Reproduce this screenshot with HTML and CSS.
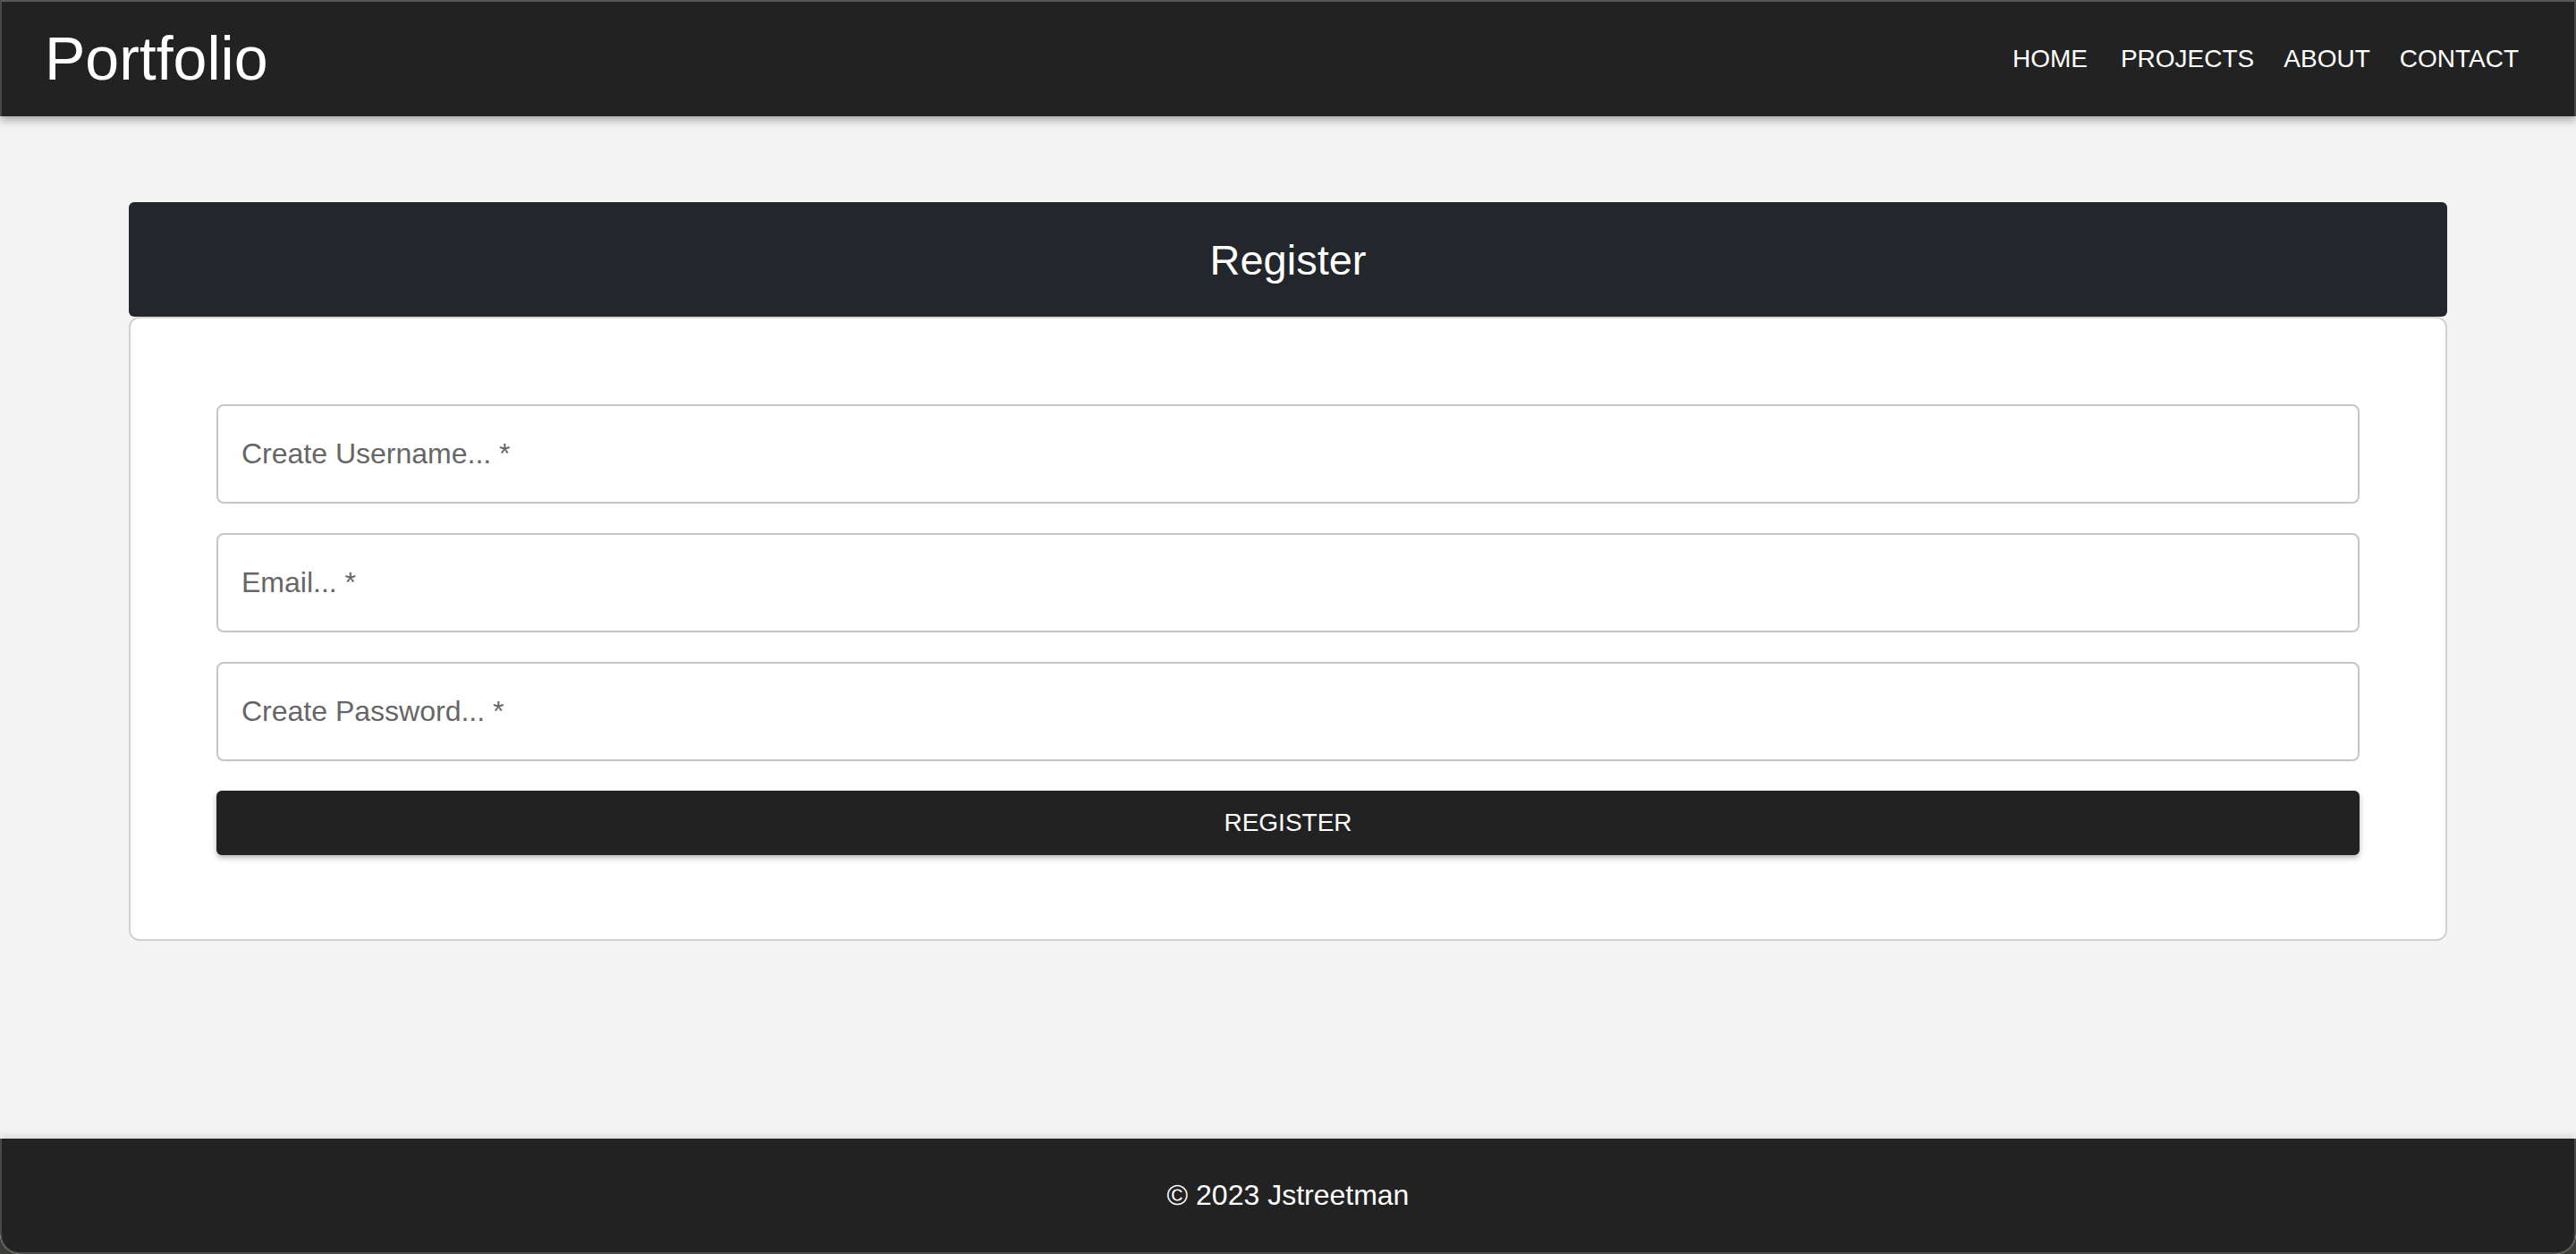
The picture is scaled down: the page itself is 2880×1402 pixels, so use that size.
FILE: index.html
```html
<!DOCTYPE html>
<html lang="en">
<head>
<meta charset="utf-8">
<title>Register</title>
<link rel="stylesheet" href="styles.css">
</head>
<body>
<div class="app">
  <header class="navbar">
    <a class="brand" href="#">Portfolio</a>
    <nav class="nav-links">
      <a class="nav-link nav-home" href="#">HOME</a>
      <a class="nav-link" href="#">PROJECTS</a>
      <a class="nav-link" href="#">ABOUT</a>
      <a class="nav-link" href="#">CONTACT</a>
    </nav>
  </header>
  <main class="content">
    <section class="card">
      <div class="card-header">
        <h2 class="card-title">Register</h2>
      </div>
      <form class="card-body">
        <input class="field" type="text" placeholder="Create Username... *">
        <input class="field" type="email" placeholder="Email... *">
        <input class="field" type="password" placeholder="Create Password... *">
        <button class="btn" type="button">REGISTER</button>
      </form>
    </section>
  </main>
  <footer class="footer">
    <p class="footer-text">© 2023 Jstreetman</p>
  </footer>
</div>
</body>
</html>
```
FILE: styles.css
```css
* { box-sizing: border-box; }
html {
  margin: 0;
  background: #3b3b37;
}
body {
  margin: 0;
  font-family: "Liberation Sans", Arial, Helvetica, sans-serif;
}
.app {
  min-height: 1402px;
  display: flex;
  flex-direction: column;
  background: #f4f4f4;
  border-radius: 0 0 22px 22px;
  overflow: hidden;
}
.navbar {
  height: 130px;
  background: #222222;
  display: flex;
  align-items: center;
  justify-content: space-between;
  padding: 0 62px 0 48px;
  border-top: 2px solid #575757;
  border-left: 2px solid #4a4a4a;
  border-right: 2px solid #4a4a4a;
  box-shadow: 0 4px 10px rgba(0, 0, 0, 0.35);
  position: relative;
  z-index: 2;
}
.brand {
  color: #ffffff;
  text-decoration: none;
  font-size: 68px;
  line-height: 1;
  margin-top: -2px;
}
.nav-links {
  display: flex;
  align-items: center;
  gap: 33px;
}
.nav-link {
  color: #ffffff;
  text-decoration: none;
  font-size: 28px;
  line-height: 1;
}
.nav-home { margin-right: 4px; }
.content {
  flex: 1;
  padding-top: 96px;
  display: flex;
  flex-direction: column;
  align-items: center;
}
.card {
  width: 90%;
  display: flex;
  flex-direction: column;
}
.card-header {
  height: 128px;
  background: #23262b;
  border-radius: 6px;
  display: flex;
  align-items: center;
  justify-content: center;
}
.card-title {
  margin: 0;
  color: #ffffff;
  font-weight: normal;
  font-size: 47px;
  line-height: 1;
}
.card-body {
  background: #ffffff;
  border: 2px solid #d2d2d2;
  border-radius: 12px;
  padding: 96px 96px 94px;
  display: flex;
  flex-direction: column;
  gap: 33px;
}
.field {
  height: 111px;
  width: 100%;
  border: 2px solid #c6c6c6;
  border-radius: 8px;
  padding: 0 26px;
  font-family: "Liberation Sans", Arial, Helvetica, sans-serif;
  font-size: 32px;
  color: #333;
  background: #fff;
  outline: none;
}
.field::placeholder {
  color: #666666;
}
.btn {
  height: 72px;
  width: 100%;
  background: #222222;
  color: #ffffff;
  border: none;
  border-radius: 6px;
  font-family: "Liberation Sans", Arial, Helvetica, sans-serif;
  font-size: 28px;
  box-shadow: 0 3px 6px rgba(0, 0, 0, 0.3);
  cursor: pointer;
}
.footer {
  height: 129px;
  background: #222222;
  display: flex;
  align-items: center;
  justify-content: center;
  border-left: 2px solid #4a4a4a;
  border-right: 2px solid #4a4a4a;
  border-bottom: 2px solid #4a4a4a;
  border-radius: 0 0 22px 22px;
  box-shadow: 0 -3px 10px rgba(0, 0, 0, 0.12);
}
.footer-text {
  margin: 0;
  color: #ffffff;
  font-size: 32px;
}
```
